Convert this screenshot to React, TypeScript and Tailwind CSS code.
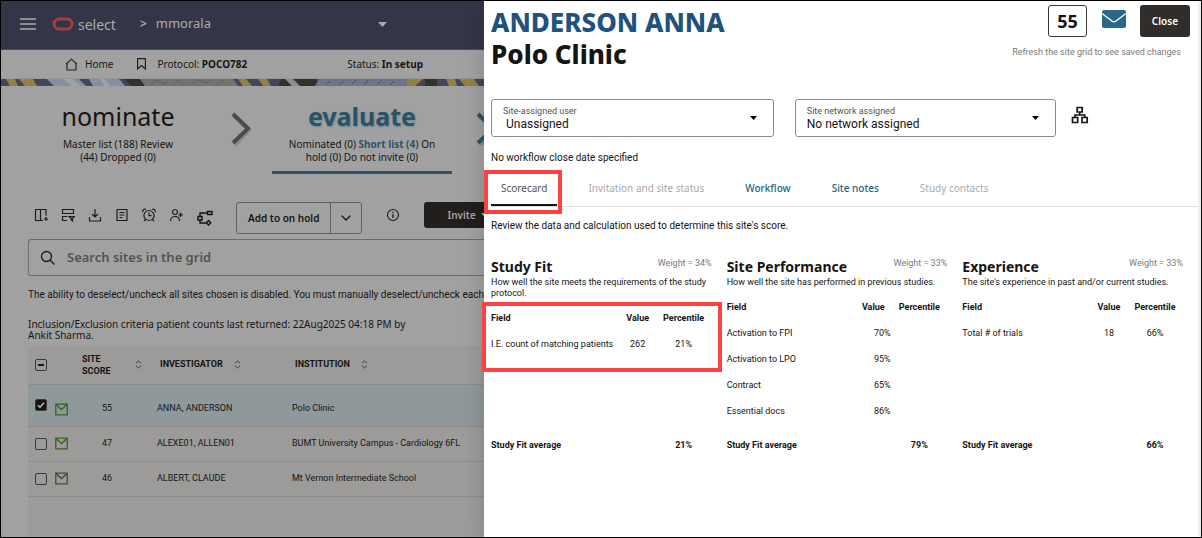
import React from "react";
import { ChevronDown } from "lucide-react";

const App = () => {
  return (
    <div className="grid min-h-screen w-full grid-cols-[483fr_717fr] border border-black bg-white font-['Roboto','Noto_Sans',sans-serif] text-[10px] text-[#161513]">
      <SitesPage />
      <SitePanel />
    </div>
  );
};

export default App;

/* ---------- dimmed page behind the panel ---------- */

function SitesPage() {
  return (
    <div className="min-w-0 overflow-hidden bg-[#a2a1a1]">
      <TopBar />
      <SubBar />
      <PatternStrip />
      <Steps />
      <div className="pl-[27px]">
        <Toolbar />
        <SearchBox />
        <p className="mt-3 whitespace-nowrap leading-[14px]">
          The ability to deselect/uncheck all sites chosen is disabled. You must
          manually deselect/uncheck each
        </p>
        <p className="mt-[17px] w-[390px] font-['Noto_Sans',sans-serif] leading-[11px]">
          Inclusion/Exclusion criteria patient counts last returned: 22Aug2025
          04:18 PM by Ankit Sharma.
        </p>
        <SitesTable />
      </div>
    </div>
  );
}

function TopBar() {
  return (
    <header className="flex h-[49px] items-center border-b border-[#4b4c57] bg-[#343648] pb-[2px] pl-[19px] font-['Noto_Sans',sans-serif] text-[13px] text-[#aaaaaa]">
      <button type="button" aria-label="Menu">
        <svg width="16" height="12" viewBox="0 0 16 12" stroke="#a9a9ab" strokeWidth="1.4">
          <path d="M0 1h16M0 6h16M0 11h16" />
        </svg>
      </button>
      <svg className="ml-4" width="22" height="14" viewBox="0 0 22 14" fill="none">
        <rect x="2" y="2" width="18" height="10" rx="5" stroke="#a03f3c" strokeWidth="3" />
      </svg>
      <span className="ml-1 text-[14px]">select</span>
      <span className="ml-6 text-[12px] font-semibold">&gt;</span>
      <button type="button" className="ml-[9px] flex items-center gap-[167px]">
        mmorala
        <svg width="9" height="5" viewBox="0 0 9 5" fill="#a9a9ab">
          <path d="M0 0h9L4.5 5z" />
        </svg>
      </button>
    </header>
  );
}

function SubBar() {
  return (
    <nav className="flex h-[29px] items-center whitespace-nowrap border-b border-[#979696] pl-16 font-['Noto_Sans',sans-serif]">
      <a href="#home" className="flex items-center gap-[7px]">
        <svg width="13" height="13" viewBox="0 0 13 13" fill="none" stroke="#222" strokeWidth="1.1">
          <path d="M2 12V5.3L6.5 1.2 11 5.3V12zM1 6l1-.8M12 6l-1-.8" />
        </svg>
        Home
      </a>
      <a href="#protocol" className="ml-6 flex items-center gap-[11px]">
        <svg width="9" height="12" viewBox="0 0 9 12" fill="none" stroke="#222" strokeWidth="1.2">
          <path d="M.6.6h7.8v10.4L4.5 7.6.6 11z" />
        </svg>
        <span>
          Protocol: <b>POCO782</b>
        </span>
      </a>
      <span className="ml-[100px]">
        Status: <b>In setup</b>
      </span>
    </nav>
  );
}

function PatternStrip() {
  return (
    <svg className="block w-full" height="7" viewBox="0 0 483 7" preserveAspectRatio="xMinYMin slice">
      <rect width="483" height="7" fill="#43465a" />
      <path d="M5 0h9l3 7H9zM18 0h14l4 7H24zM237 0h8l6 7h-9zM257 0h9l4 7h-8zM406 0h16l-8 7h-8zM445 0h9l2 7h-8zM458 0h15l5 7h-14z" fill="#94803f" />
      <path d="M46 0h32l7 7H53zM88 0h30l6 7H92z" fill="#858fa0" />
      <path d="M62 0h9l9 7h-9zM99 0h5l5 7h-6z" fill="#9aa1ab" />
      <path d="M123 0h16l5 7h-14zM280 0h34l5 7h-42zM424 0h12v7h-12z" fill="#33312f" />
      <path d="M139 0h93l5 7h-93z" fill="#747370" />
      <path d="M284 0h8l7 7h-8z" fill="#8e8d8a" />
      <path d="M318 0h88v7h-92z" fill="#6f738c" />
      <path d="M150 6q5-7 9-3t8-1M172 6q4-7 9-3M192 5q5-6 9-3t8-1M215 6q4-6 9-3" stroke="#62615f" fill="none" />
      <path d="M326 5l3-3M338 6l5-4M351 5l4-4M363 6l4-5M376 6l5-5M389 6l4-4" stroke="#4a4d66" fill="none" />
    </svg>
  );
}

function StepArrow({ color }: { color: string }) {
  return (
    <svg className="shrink-0" width="21" height="34" viewBox="0 0 21 34" fill="none">
      <path d="M3 4l15 14L4 33" stroke="#8a8989" strokeWidth="4" />
      <path d="M2 2l15 14.5L2 31" stroke={color} strokeWidth="4" />
    </svg>
  );
}

function Steps() {
  return (
    <div className="flex pl-[47px] pt-[14px] text-center font-['Noto_Sans',sans-serif]">
      <div className="w-[140px] shrink-0">
        <p className="text-[25px] leading-8">nominate</p>
        <p className="mt-[6px] px-2 leading-[13px]">
          Master list (188) Review (44) Dropped (0)
        </p>
      </div>
      <div className="ml-[43px] pt-3">
        <StepArrow color="#4c4b4a" />
      </div>
      <div className="ml-5 h-[74px] w-[180px] shrink-0 border-b-3 border-[#2a5469]">
        <p className="text-[25px] font-bold leading-8 text-[#285468] [text-shadow:1px_1px_2px_#6f8791]">
          evaluate
        </p>
        <p className="mt-[6px] px-3 leading-[13px]">
          Nominated (0) <b className="text-[#285468]">Short list (4)</b> On hold (0) Do not invite (0)
        </p>
      </div>
      <div className="ml-6 pt-3">
        <StepArrow color="#2a5469" />
      </div>
    </div>
  );
}

const toolIcons = [
  {
    label: "Columns",
    path: "M9 12.500H1.500v-11h10.500v6M6.500 1.500v11M12 9v4M10 11h4",
  },
  {
    label: "Filter rows",
    path: "M1.500 1.500h11v4h-11zM6 12.500H1.500v-4H6M8 8.500h5.500l-2 2v2.500l-1.200-1v-1.500z",
  },
  { label: "Download", path: "M1.500 9v4h11v-4M7 1v8M4 6l3 3 3-3" },
  { label: "Notes", path: "M2 1.500h10v11H2zM4.500 4.500h5M4.500 7h5M4.500 9.500h3" },
  {
    label: "Reminder",
    path: "M7 2.500a5 5 0 1 0 .01 0M7 4.500v3.200h2.500M1 4a2 2 0 0 1 3-2.500M13 4a2 2 0 0 0-3-2.500M3.500 11.500l-1.500 1.500M10.500 11.500l1.500 1.500",
  },
  {
    label: "Add person",
    path: "M6 1.500a2.500 2.500 0 1 0 .01 0M1.500 13c0-6 9-6 9 0M11.500 4.500v4.500M9.500 6.800h4.500",
  },
];

function Toolbar() {
  return (
    <div className="mt-[28px] flex h-8 items-center whitespace-nowrap pl-[6px]">
      <div className="mb-[6px] flex gap-[13px]">
        {toolIcons.map((icon) => (
          <button key={icon.label} type="button" aria-label={icon.label}>
            <svg width="14" height="14" viewBox="0 0 14 14" fill="none" stroke="#1d1c1b" strokeWidth="1.2">
              <path d={icon.path} />
            </svg>
          </button>
        ))}
      </div>
      <button type="button" aria-label="Workflow" className="ml-[14px]">
        <svg width="16" height="16" viewBox="0 0 16 16" fill="none" stroke="#111" strokeWidth="1.400">
          <path d="M10.500 1.500h4.500v3h-4.500zM10.500 3H3v3.500M1 6.500h4v3.500H1zM3 10v3h6.500M11.500 10.500l2.200 2.200-2.200 2.200-2.200-2.200z" />
        </svg>
      </button>
      <div className="ml-[23px] flex h-8 items-stretch rounded-[3px] border border-[#626160] font-['Noto_Sans',sans-serif] font-semibold">
        <button type="button" className="border-r border-[#626160] px-[11px]">
          Add to on hold
        </button>
        <button type="button" aria-label="More hold actions" className="px-[7px]">
          <ChevronDown size={16} />
        </button>
      </div>
      <button type="button" aria-label="Information" className="mb-[6px] ml-6">
        <svg width="14" height="14" viewBox="0 0 14 14" fill="none" stroke="#1d1c1b" strokeWidth="1.1">
          <circle cx="7" cy="7" r="5.500" />
          <path d="M7 6v4M7 3.700v1.200" strokeWidth="1.300" />
        </svg>
      </button>
      <button
        type="button"
        className="mb-[6px] ml-6 flex h-[26px] shrink-0 items-center gap-[5px] rounded-[3px] bg-[#211e1c] pl-[23px] pr-6 font-['Noto_Sans',sans-serif] font-semibold text-[#a5a4a3]"
      >
        Invite
        <svg width="7" height="4" viewBox="0 0 7 4" fill="#a5a4a3">
          <path d="M0 0h7L3.500 4z" />
        </svg>
      </button>
    </div>
  );
}

function SearchBox() {
  return (
    <div className="mt-[5px] flex h-[37px] items-center gap-[11px] rounded-l-[3px] border border-r-0 border-[#6d6c6b] pl-[11px] font-['Noto_Sans',sans-serif]">
      <svg width="16" height="16" viewBox="0 0 16 16" fill="none" stroke="#1d1c1b" strokeWidth="1.300">
        <circle cx="6.500" cy="6.500" r="5" />
        <path d="M10.200 10.200l4.300 4.300" />
      </svg>
      <input
        type="text"
        aria-label="Search sites in the grid"
        placeholder="Search sites in the grid"
        className="min-w-0 flex-1 bg-transparent text-[13px] font-semibold outline-none placeholder:text-[#545352]"
      />
    </div>
  );
}

function SortIcon() {
  return (
    <svg width="7" height="9" viewBox="0 0 7 9" fill="none" stroke="#3b3a39">
      <path d="M1 3.200L3.500 1 6 3.200M1 5.800L3.500 8 6 5.800" />
    </svg>
  );
}

function MailIcon({ dark }: { dark?: boolean }) {
  return (
    <svg width="13" height="13" viewBox="0 0 13 13" fill="none" strokeWidth="1.300">
      <path d="M.8 1.200h11.400v10.600H.8z" stroke={dark ? "#3e5630" : "#37621f"} />
      <path d="M1 1.500l5.500 5 5.500-5" stroke={dark ? "#3e4a38" : "#37621f"} />
    </svg>
  );
}

const checkboxStyle =
  "block size-3 appearance-none rounded-[2px] border border-[#3b3a39]";

const sites = [
  { score: 55, investigator: "ANNA, ANDERSON", institution: "Polo Clinic", selected: true },
  { score: 47, investigator: "ALEXE01, ALLEN01", institution: "BUMT University Campus - Cardiology 6FL" },
  { score: 46, investigator: "ALBERT, CLAUDE", institution: "Mt Vernon Intermediate School", dark: true },
];

function SitesTable() {
  return (
    <div className="mt-[5px] min-h-[191px] bg-[#9d9b99]">
      <table className="w-full table-fixed text-left text-[9px]">
        <colgroup>
          <col className="w-[27px]" />
          <col className="w-[27px]" />
          <col className="w-[75px]" />
          <col className="w-[135px]" />
          <col />
        </colgroup>
        <thead>
          <tr className="h-[38px] border-b border-[#8d8b89]">
            <th className="pl-[7px]">
              <label className="relative block size-3">
                <input type="checkbox" aria-label="Select all sites" className={checkboxStyle} />
                <span className="pointer-events-none absolute inset-x-[3px] top-[5px] h-[2px] bg-[#1d1c1b]" />
              </label>
            </th>
            <th aria-label="Mail" />
            <th>
              <div className="flex items-center justify-between pr-[15px] leading-3">
                <span className="w-8">SITE SCORE</span>
                <SortIcon />
              </div>
            </th>
            <th>
              <div className="flex items-center gap-[11px] pl-[3px]">
                INVESTIGATOR <SortIcon />
              </div>
            </th>
            <th>
              <div className="flex items-center gap-[11px] pl-[3px]">
                INSTITUTION <SortIcon />
              </div>
            </th>
          </tr>
        </thead>
        <tbody>
          {sites.map((site) => (
            <tr
              key={site.score}
              className={
                site.selected
                  ? "h-[42px] border-b border-[#8d8b89] bg-[#8f999b]"
                  : "h-[35px] border-b border-[#8d8b89]"
              }
            >
              <td className="pl-[7px]">
                <label className="relative block size-3">
                  <input
                    type="checkbox"
                    aria-label={"Select " + site.investigator}
                    defaultChecked={site.selected}
                    className={checkboxStyle + " checked:bg-[#161513]"}
                  />
                  {site.selected && (
                    <svg className="pointer-events-none absolute inset-0" viewBox="0 0 12 12" fill="none" stroke="#b5bdc0" strokeWidth="1.500">
                      <path d="M3 6.200l2 2 4-4.400" />
                    </svg>
                  )}
                </label>
              </td>
              <td className={site.selected ? "pt-2" : ""}>
                <MailIcon dark={site.dark} />
              </td>
              <td className={site.selected ? "pl-5 pt-2" : "pl-5"}>{site.score}</td>
              <td className={site.selected ? "pt-2" : ""}>{site.investigator}</td>
              <td className={site.selected ? "whitespace-nowrap pt-2" : "whitespace-nowrap"}>
                {site.institution}
              </td>
            </tr>
          ))}
        </tbody>
      </table>
    </div>
  );
}

/* ---------- site details panel ---------- */

function SitePanel() {
  return (
    <aside className="relative z-10 min-w-0 border-r-3 border-[#f0f0f0] bg-white pl-[7px] shadow-[0_0_20px_rgba(0,0,0,0.18)]">
      <PanelHeader />
      <div className="mt-[29px] flex items-center">
        <SelectField id="user" label="Site-assigned user" value="Unassigned" className="w-2/5" indent />
        <SelectField id="network" label="Site network assigned" value="No network assigned" className="ml-[21px] w-[37%]" />
        <button type="button" aria-label="Site network" className="mb-[6px] ml-[15px]">
          <svg width="18" height="18" viewBox="0 0 18 18" fill="none" stroke="#161513" strokeWidth="1.700">
            <path d="M6.200 1.500h5v4.500h-5zM1.500 11.500h5.200v5H1.500zM11 11.500h5.200v5H11zM8.700 6v3M4 11.500V9h9.700v2.500" />
          </svg>
        </button>
      </div>
      <p className="mt-[14px] leading-[14px]">No workflow close date specified</p>
      <Tabs />
      <p className="mt-3 leading-[14px]">
        Review the data and calculation used to determine this site&#39;s score.
      </p>
      <div className="mt-6 grid grid-cols-3">
        {scoreCards.map((card) => (
          <ScoreCard key={card.title} card={card} />
        ))}
      </div>
    </aside>
  );
}

function PanelHeader() {
  return (
    <div className="flex items-start justify-between pr-2 pt-1">
      <h1 className="pt-px font-['Noto_Sans',sans-serif] text-[26px] font-extrabold leading-8">
        <span className="block text-[#1f527f]">ANDERSON ANNA</span>
        <span className="block">Polo Clinic</span>
      </h1>
      <div className="flex flex-col items-end">
        <div className="flex items-center">
          <span className="flex h-8 items-center rounded-[3px] border border-[#3b3a39] px-2 font-['Noto_Sans',sans-serif] text-[18px] font-bold">
            55
          </span>
          <button type="button" aria-label="Send mail" className="mb-1 ml-[15px]">
            <svg width="24" height="18" viewBox="0 0 24 18">
              <rect width="24" height="18" rx="2" fill="#2c6789" />
              <path d="M0 3.500l10.300 7.700q1.700 1.200 3.400 0L24 3.500" fill="none" stroke="#fff" strokeWidth="1.400" />
            </svg>
          </button>
          <button
            type="button"
            className="ml-[14px] h-8 rounded-[3px] bg-[#312d2a] px-3 font-['Noto_Sans',sans-serif] font-semibold text-white"
          >
            Close
          </button>
        </div>
        <p className="mr-[9px] mt-2 text-[9px] leading-[14px] text-[#7a7979]">
          Refresh the site grid to see saved changes
        </p>
      </div>
    </div>
  );
}

function SelectField({ id, label, value, className, indent }: any) {
  return (
    <div className={"relative flex h-[38px] flex-col justify-center rounded-[3px] border border-[#8b8a89] px-[11px] " + className}>
      <label htmlFor={id} className="text-[9px] leading-3 text-[#55524f]">
        {label}
      </label>
      <select
        id={id}
        className={
          indent
            ? "appearance-none bg-transparent pl-[3px] text-[12px] leading-[14px] outline-none"
            : "appearance-none bg-transparent text-[12px] leading-[14px] outline-none"
        }
      >
        <option>{value}</option>
      </select>
      <svg className="pointer-events-none absolute right-4 top-4" width="7" height="4" viewBox="0 0 7 4">
        <path d="M0 0h7L3.500 4z" />
      </svg>
    </div>
  );
}

const tabs = [
  { label: "Scorecard", active: true },
  { label: "Invitation and site status", disabled: true },
  { label: "Workflow" },
  { label: "Site notes" },
  { label: "Study contacts", disabled: true },
];

function Tabs() {
  return (
    <div
      role="tablist"
      className="mt-[5px] flex h-[37px] gap-[21px] border-b border-[#dcdcdc] font-['Noto_Sans',sans-serif]"
    >
      {tabs.map((tab) => (
        <button
          key={tab.label}
          type="button"
          role="tab"
          aria-selected={!!tab.active}
          disabled={tab.disabled}
          className={
            tab.active
              ? "relative border-b-2 border-[#161513] px-[10px] pt-[2px] text-[#55524f]"
              : tab.disabled
                ? "px-[10px] text-[#a9a8a7]"
                : "px-[10px] font-medium text-[#1f6583]"
          }
        >
          {tab.label}
          {tab.active && (
            <span className="absolute -bottom-[10px] -left-[7px] -right-[5px] top-0 border-4 border-[#fb4343]" />
          )}
        </button>
      ))}
    </div>
  );
}

const scoreCards = [
  {
    title: "Study Fit",
    weight: "34%",
    about: "How well the site meets the requirements of the study protocol.",
    rows: [["I.E. count of matching patients", "262", "21%"]],
    average: "21%",
    highlighted: true,
  },
  {
    title: "Site Performance",
    weight: "33%",
    about: "How well the site has performed in previous studies.",
    rows: [
      ["Activation to FPI", "70%", ""],
      ["Activation to LPO", "95%", ""],
      ["Contract", "65%", ""],
      ["Essential docs", "86%", ""],
    ],
    average: "79%",
  },
  {
    title: "Experience",
    weight: "33%",
    about: "The site's experience in past and/or current studies.",
    rows: [["Total # of trials", "18", "66%"]],
    average: "66%",
  },
];

function ScoreCard({ card }: any) {
  return (
    <section className="flex flex-col pr-[15px] text-[9px]">
      <div className="flex justify-between">
        <h2 className="font-['Noto_Sans',sans-serif] text-[14px] font-bold leading-5">
          {card.title}
        </h2>
        <span className="leading-3 text-[#7a7979]">Weight = {card.weight}</span>
      </div>
      <p className="leading-[11px]">{card.about}</p>
      <div className="relative mt-[7px]">
        <table className="w-full table-fixed">
          <colgroup>
            <col />
            <col className="w-9" />
            <col className="w-14" />
          </colgroup>
          <thead>
            <tr className="h-[26px]">
              <th className="text-left">Field</th>
              <th>Value</th>
              <th>Percentile</th>
            </tr>
          </thead>
          <tbody>
            {card.rows.map(([field, value, percentile]: string[]) => (
              <tr key={field} className="h-[26px] text-center">
                <td className="whitespace-nowrap text-left">{field}</td>
                <td className={percentile ? "" : "pl-[18px]"}>{value}</td>
                <td>{percentile}</td>
              </tr>
            ))}
          </tbody>
        </table>
        {card.highlighted && (
          <div className="pointer-events-none absolute -bottom-[14px] -left-[9px] -right-[10px] -top-1 border-4 border-[#fb4343]" />
        )}
      </div>
      <p className="mt-auto flex justify-between pt-[14px] font-bold leading-3">
        <span>Study Fit average</span>
        <span className="w-14 text-center">{card.average}</span>
      </p>
    </section>
  );
}
